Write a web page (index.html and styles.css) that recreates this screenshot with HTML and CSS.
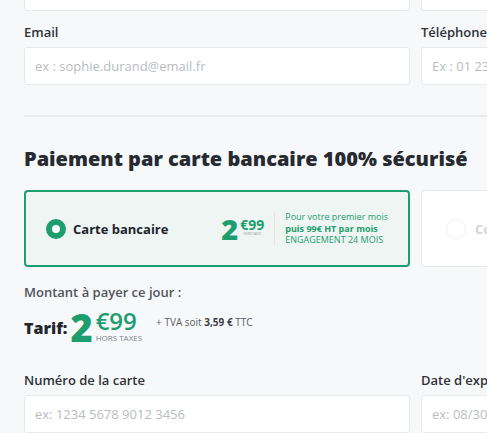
FILE: index.html
```html
<!DOCTYPE html>
<html lang="fr">
<head>
    <meta charset="UTF-8">
    <meta name="viewport" content="width=device-width, initial-scale=1.0">
    <title>Paiement</title>
    <link rel="stylesheet" href="styles.css">
</head>
<body>
    <div class="checkout">
        <div class="row row-top">
            <div class="field"><input type="text"></div>
            <div class="field"><input type="text"></div>
        </div>

        <div class="row">
            <div class="field">
                <label>Email</label>
                <input type="text" placeholder="ex : sophie.durand@email.fr">
            </div>
            <div class="field">
                <label>Téléphone</label>
                <input type="text" placeholder="Ex : 01 23 45 67 89">
            </div>
        </div>

        <hr class="divider">

        <h2>Paiement par carte bancaire 100% sécurisé</h2>

        <div class="row">
            <div class="pay-option active">
                <span class="radio"></span>
                <span class="option-name">Carte bancaire</span>
                <div class="option-price">
                    <span class="big">2</span>
                    <span class="cents">€99<small>HORS TAXES</small></span>
                </div>
                <div class="option-terms">
                    <span>Pour votre premier mois</span>
                    <strong>puis 99€ HT par mois</strong>
                    <span>ENGAGEMENT 24 MOIS</span>
                </div>
            </div>
            <div class="pay-option disabled">
                <span class="radio"></span>
                <span class="option-name">Compte bancaire</span>
            </div>
        </div>

        <p class="amount-label">Montant à payer ce jour :</p>
        <div class="tarif">
            <span class="tarif-label">Tarif:</span>
            <span class="tarif-big">2</span>
            <span class="tarif-cents">€99<small>HORS TAXES</small></span>
            <span class="tarif-tva">+ TVA soit <b>3,59 €</b> TTC</span>
        </div>

        <div class="row row-card">
            <div class="field">
                <label>Numéro de la carte</label>
                <input type="text" placeholder="ex: 1234 5678 9012 3456">
            </div>
            <div class="field">
                <label>Date d'expiration</label>
                <input type="text" placeholder="ex: 08/30">
            </div>
        </div>
    </div>
</body>
</html>
```

FILE: styles.css
```css
* {
    margin: 0;
    padding: 0;
    box-sizing: border-box;
}

body {
    font-family: 'Open Sans', sans-serif;
    background-color: #f7f8fa;
    color: #2a2e35;
    overflow: hidden;
}

.checkout {
    padding-left: 24px;
    width: 820px;
}

.row {
    display: grid;
    grid-template-columns: 386px 386px;
    gap: 11px;
}

.row-top {
    margin-top: -27px;
    margin-bottom: 12px;
}

.field label {
    display: block;
    font-size: 13px;
    font-weight: 600;
    line-height: 18px;
    color: #2e3238;
    margin-bottom: 6px;
}

.field input {
    width: 100%;
    height: 38px;
    padding: 0 10px;
    font-family: 'Open Sans', sans-serif;
    font-size: 13px;
    border: 1px solid #e7e9ec;
    border-radius: 3px;
    background: #fff;
    outline: none;
}

.field input::placeholder {
    color: #b9bcc0;
}

.divider {
    border: none;
    border-top: 2px solid #e8eaed;
    margin-top: 30px;
}

h2 {
    font-size: 20px;
    font-weight: 800;
    line-height: 28px;
    color: #262a31;
    margin-top: 28px;
    margin-bottom: 17px;
}

.pay-option {
    display: flex;
    align-items: center;
    height: 77px;
    padding: 0 20px;
    border-radius: 4px;
    background: #fff;
    border: 1px solid #e6e8ea;
}

.pay-option.active {
    background: #eef5f3;
    border: 2px solid #1e9e6e;
}

.radio {
    width: 20px;
    height: 20px;
    border-radius: 50%;
    border: 6px solid #1e9e6e;
    background: #fff;
    flex-shrink: 0;
}

.pay-option.disabled .radio {
    border: 1px solid #eeeff1;
    margin-left: 4px;
}

.option-name {
    font-size: 13px;
    font-weight: 700;
    margin-left: 7px;
    color: #22262c;
}

.pay-option.disabled .option-name {
    color: #d2d4d7;
    margin-left: 9px;
}

.option-price {
    display: flex;
    align-items: center;
    margin-left: auto;
    color: #1e9e6e;
    padding-right: 10px;
    border-right: 1px solid #dfe6e3;
    height: 34px;
}

.option-price .big {
    font-size: 29px;
    font-weight: 800;
    line-height: 1;
}

.option-price .cents {
    display: flex;
    flex-direction: column;
    font-size: 14px;
    font-weight: 700;
    line-height: 14px;
    margin-left: 2px;
    margin-top: -4px;
}

.option-price .cents small {
    font-size: 3px;
    line-height: 4px;
    color: #8a9a94;
    font-weight: 400;
    text-align: center;
}

.option-terms {
    display: flex;
    flex-direction: column;
    font-size: 9px;
    line-height: 11.5px;
    color: #1e9e6e;
    padding-left: 10px;
}

.option-terms strong {
    font-weight: 700;
}

.amount-label {
    font-size: 13px;
    font-weight: 600;
    line-height: 18px;
    color: #4f545b;
    margin-top: 16px;
}

.tarif {
    display: flex;
    align-items: center;
    margin-top: 5px;
    height: 42px;
}

.tarif-label {
    font-size: 16px;
    font-weight: 800;
    color: #22262c;
    margin-top: 2px;
}

.tarif-big {
    font-size: 38px;
    font-weight: 800;
    color: #1e9e6e;
    line-height: 1;
    margin-left: 3px;
}

.tarif-cents {
    display: flex;
    flex-direction: column;
    font-size: 24px;
    font-weight: 600;
    line-height: 24px;
    color: #1e9e6e;
    margin-left: 3px;
    margin-top: -2px;
}

.tarif-cents small {
    font-size: 8px;
    line-height: 10px;
    color: #7d8288;
    font-weight: 400;
}

.tarif-tva {
    font-size: 10px;
    color: #5a5f66;
    margin-left: 14px;
    margin-top: -10px;
}

.tarif-tva b {
    font-weight: 700;
    color: #3b3f45;
}

.row-card {
    margin-top: 23px;
}
```
